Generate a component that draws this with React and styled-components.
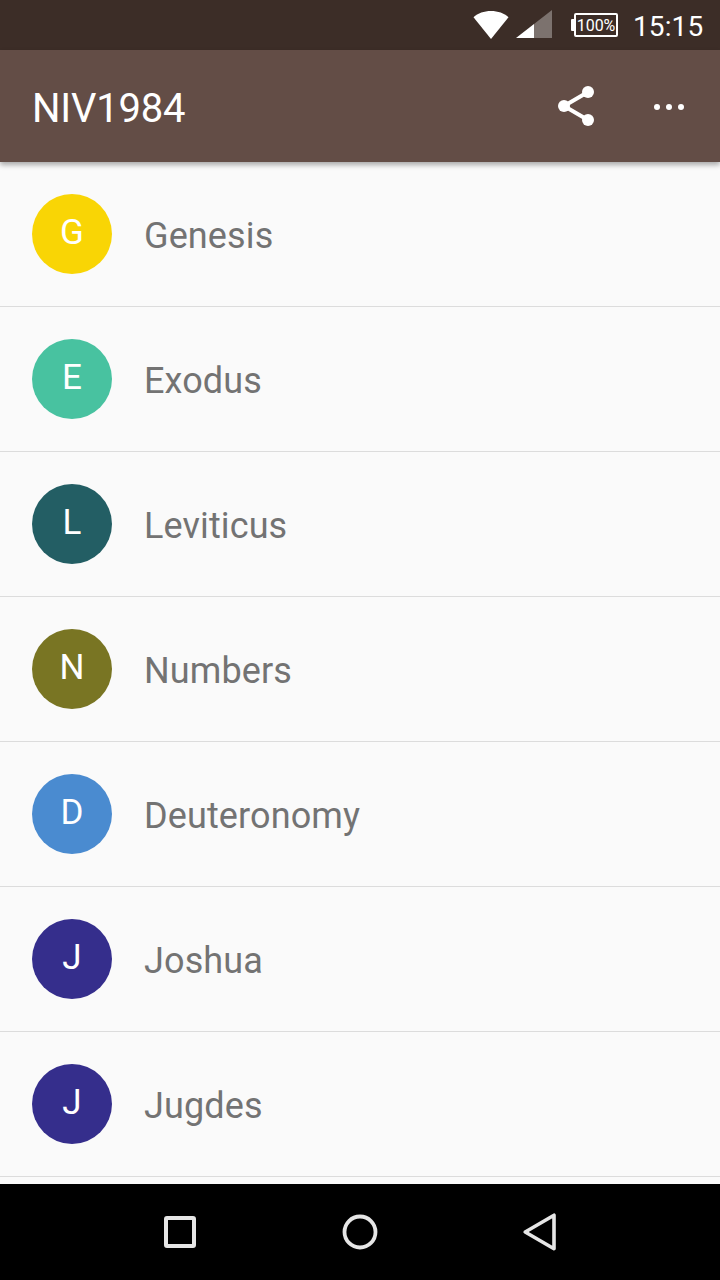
import React from "react";
import styled, { createGlobalStyle } from "styled-components";

const GlobalStyle = createGlobalStyle`
  * { box-sizing: border-box; }
  body { margin: 0; background: #fafafa; font-family: Roboto, sans-serif; }
  svg { display: block; }
`;

const Screen = styled.div`
  width: 720px;
  height: 1280px;
  display: flex;
  flex-direction: column;
  overflow: hidden;
  background: #fafafa;
`;

const StatusBar = styled.header`
  flex: none;
  height: 50px;
  padding-right: 16px;
  display: flex;
  align-items: center;
  justify-content: flex-end;
  background: #3c2d27;
  color: #fff;
`;

const StatusIcons = styled.svg`
  flex: none;
`;

const Battery = styled.div`
  display: flex;
  align-items: center;
  margin: 0 15px 0 19px;
`;

const BatteryTip = styled.span`
  width: 3px;
  height: 12px;
  background: #fff;
  border-radius: 1px 0 0 1px;
`;

const BatteryBody = styled.span`
  width: 44px;
  height: 24px;
  border: 2px solid #fff;
  border-radius: 2px;
  font-size: 16px;
  line-height: 21px;
  display: flex;
  justify-content: center;
`;

const Clock = styled.time`
  width: 71px;
  font-size: 28px;
  line-height: 32px;
  padding-top: 4px;
  letter-spacing: 0.1px;
`;

const AppBar = styled.div`
  flex: none;
  height: 112px;
  padding: 0 27px 0 32px;
  display: flex;
  align-items: center;
  background: #634d46;
  color: #fff;
  box-shadow: 0 3px 5px rgba(0, 0, 0, 0.32);
  z-index: 1;
`;

const Title = styled.h1`
  flex: 1;
  margin: 0;
  padding-top: 6px;
  font-size: 40px;
  line-height: 48px;
  font-weight: 400;
  letter-spacing: -0.2px;
`;

const IconButton = styled.button`
  padding: 0;
  border: 0;
  background: none;
  color: inherit;
  margin-left: ${(p) => p.$gap || 0}px;
`;

const BookList = styled.ul`
  flex: 1;
  min-height: 0;
  margin: 0;
  padding: 0;
  list-style: none;
  overflow: hidden;
`;

const BookRow = styled.li`
  height: 145px;
  padding: 0 32px;
  display: flex;
  align-items: center;
  gap: 32px;
  border-bottom: 1px solid #dcdcdc;
`;

const Avatar = styled.span`
  width: 80px;
  height: 80px;
  border-radius: 50%;
  background: ${(p) => p.$color};
  color: #fff;
  font-size: 35px;
  line-height: 78px;
  text-align: center;
`;

const BookName = styled.span`
  font-size: 36px;
  line-height: 42px;
  padding-top: 3px;
  letter-spacing: 0.12px;
  color: #737373;
`;

const NavBar = styled.nav`
  flex: none;
  height: 96px;
  padding: 0 90px;
  display: grid;
  grid-template-columns: repeat(3, 1fr);
  place-items: center;
  background: #000;
  color: #e6e6e6;
`;

const books = [
  ["Genesis", "#f9d505"],
  ["Exodus", "#48c2a0"],
  ["Leviticus", "#235e64"],
  ["Numbers", "#797523"],
  ["Deuteronomy", "#4a8bd0"],
  ["Joshua", "#352e8c"],
  ["Jugdes", "#352e8c"],
];

export default function App() {
  return (
    <>
      <GlobalStyle />
      <Screen>
        <StatusBar>
          <StatusIcons width="80" height="50" viewBox="0 0 80 50" fill="#fff">
            <path d="M1.5 17.2C6 13.2 12 11 19 11s13 2.2 17.5 6.2L19 39Z" />
            <path d="M80 10V38H62V24Z" fillOpacity=".33" />
            <path d="M62 24V38H44Z" />
          </StatusIcons>
          <Battery>
            <BatteryTip />
            <BatteryBody>100%</BatteryBody>
          </Battery>
          <Clock>15:15</Clock>
        </StatusBar>
        <AppBar>
          <Title>NIV1984</Title>
          <IconButton aria-label="Share">
            <svg width="48" height="48" viewBox="0 0 48 48" fill="#fff">
              <path d="M36 10 12 24 36 38" fill="none" stroke="#fff" strokeWidth="4" />
              <circle cx="36" cy="10" r="6" />
              <circle cx="12" cy="24" r="6" />
              <circle cx="36" cy="38" r="6" />
            </svg>
          </IconButton>
          <IconButton aria-label="More options" $gap={45}>
            <svg width="48" height="48" viewBox="0 0 48 48" fill="#fff">
              <circle cx="12" cy="25" r="3" />
              <circle cx="24" cy="25" r="3" />
              <circle cx="36" cy="25" r="3" />
            </svg>
          </IconButton>
        </AppBar>
        <BookList>
          {books.map(([name, color]) => (
            <BookRow key={name}>
              <Avatar $color={color}>{name[0]}</Avatar>
              <BookName>{name}</BookName>
            </BookRow>
          ))}
        </BookList>
        <NavBar>
          <svg width="48" height="48" fill="none" stroke="currentColor" strokeWidth="4">
            <rect x="10" y="10" width="28" height="28" rx="1" />
          </svg>
          <svg width="48" height="48" fill="none" stroke="currentColor" strokeWidth="3.8">
            <circle cx="24" cy="24" r="15.5" />
          </svg>
          <svg width="48" height="48" fill="none" stroke="currentColor" strokeWidth="3.6" strokeLinejoin="round">
            <path d="M38 7.2V40.8L9.2 24Z" />
          </svg>
        </NavBar>
      </Screen>
    </>
  );
}
